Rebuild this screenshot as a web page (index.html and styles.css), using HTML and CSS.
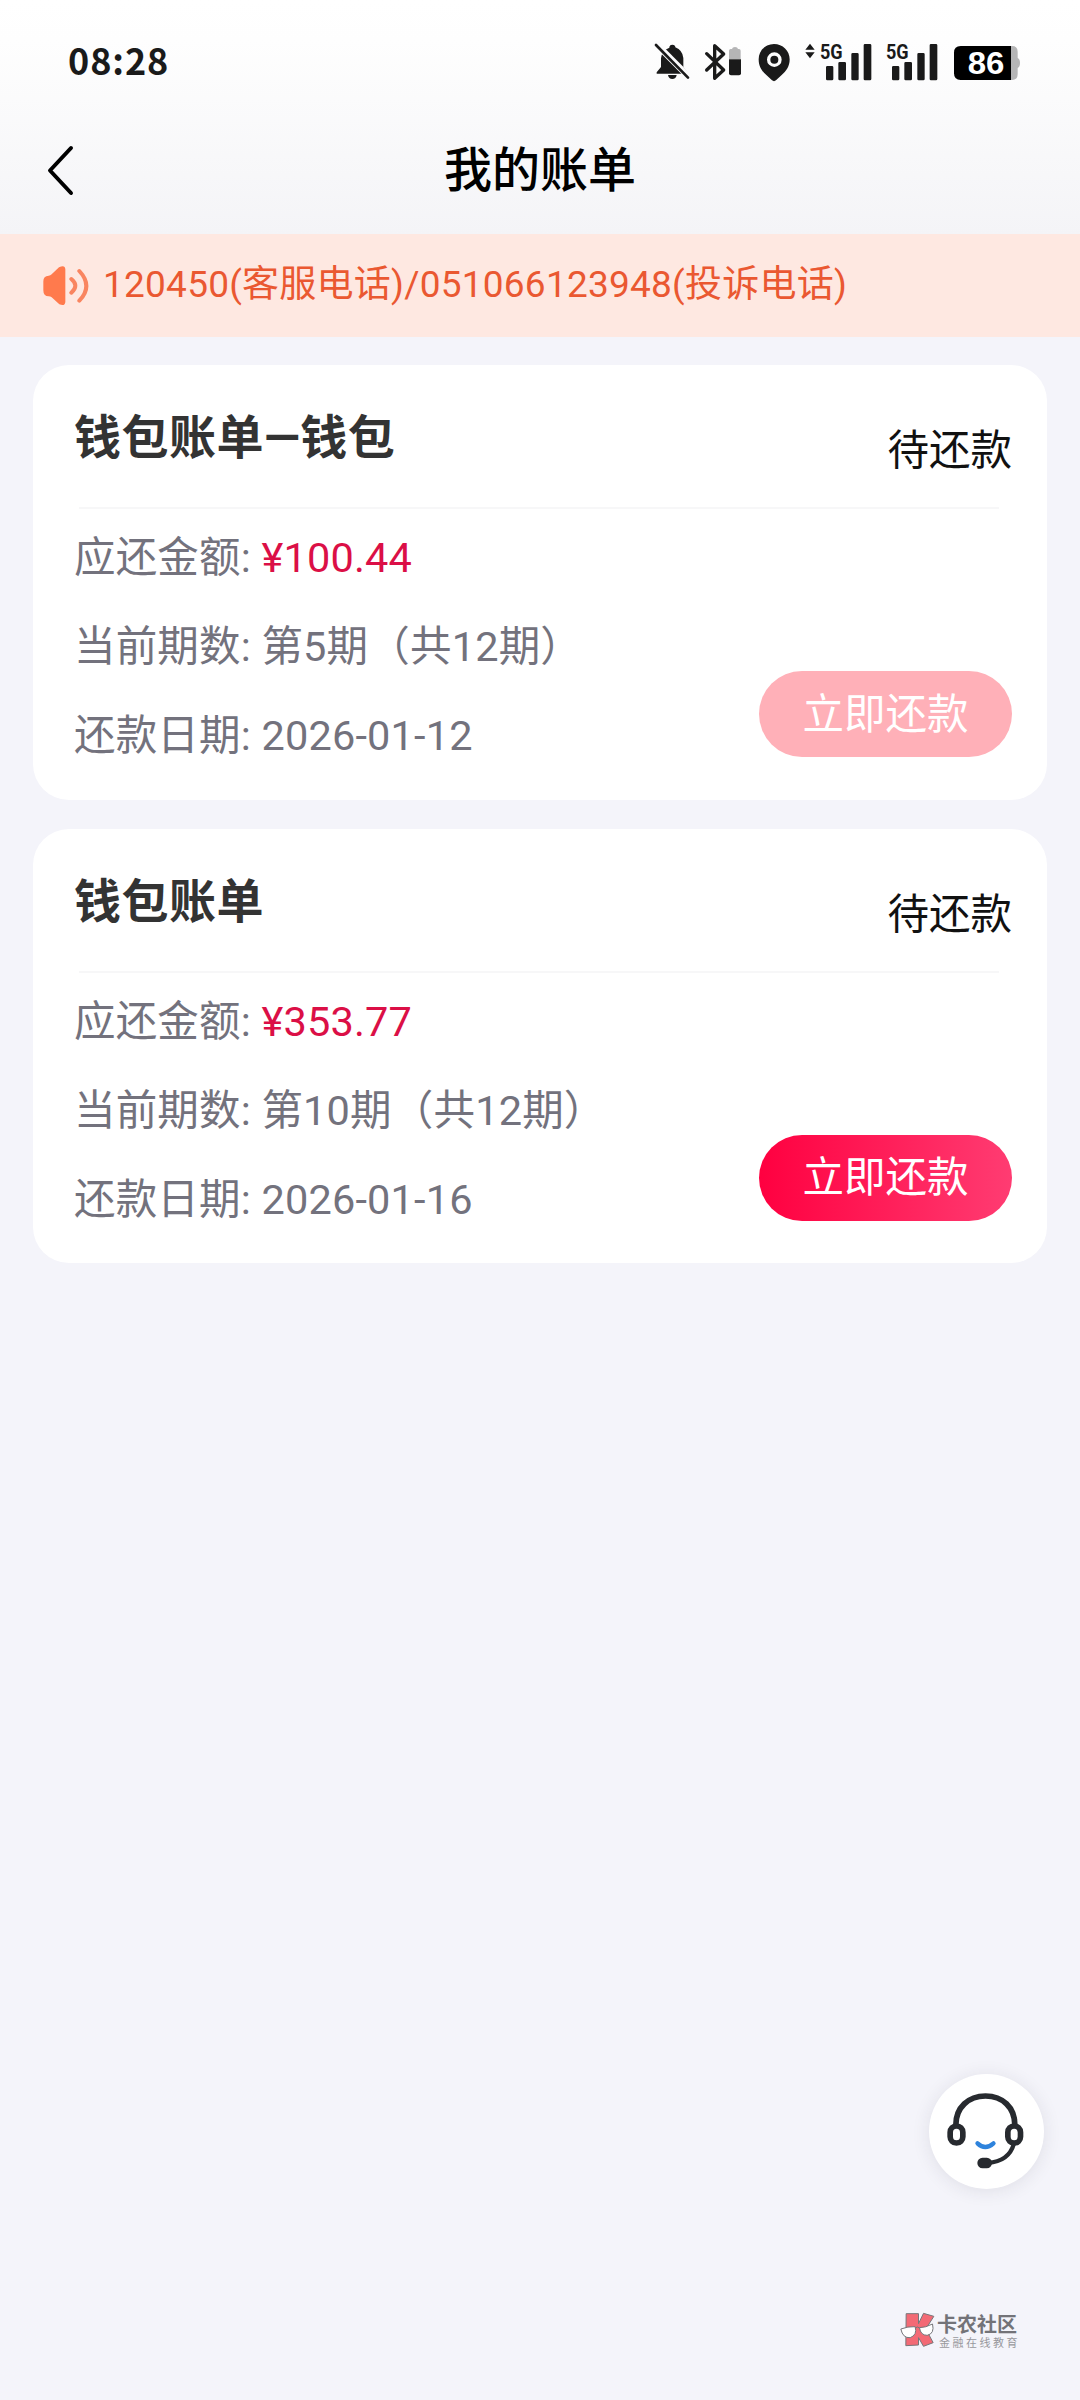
FILE: index.html
```html
<!DOCTYPE html>
<html lang="zh-CN">
<head>
<meta charset="utf-8">
<title>我的账单</title>
<link rel="stylesheet" href="styles.css">
</head>
<body>
<div class="screen">
  <header class="header">
    <div class="status">
      <span class="clock">08:28</span>
      <svg class="status-icons" viewBox="0 0 1200 210" fill="#1a1a1a">
        <path d="M88 53q0-9 9-9t9 8q22 9 24 32v27l15 18v2H50v-4l13-16V85q2-23 25-32z"/>
        <path d="M84 135h26q-2 12-13 12t-13-12z"/>
        <path d="M43 37l110 110" stroke="#fcfcfd" stroke-width="19"/>
        <path d="M48 45l96 98" stroke="#1a1a1a" stroke-width="8" stroke-linecap="round"/>
        <path d="M200 71l51 49-27 25V47l27 25-51 48" fill="none" stroke="#1a1a1a" stroke-width="10" stroke-linecap="round" stroke-linejoin="round"/>
        <path d="M267 87V62q0-5 5-5h4q1-6 9-6t9 6h3q5 0 5 5v25z" fill="#b5b5b6"/>
        <path d="M267 88h36v42q0 6-6 6h-24q-6 0-6-6z"/>
        <path fill-rule="evenodd" d="M402 42c26 0 47 20 47 46 0 22-11 36-24 47l-17 16q-6 5-12 0l-17-16c-13-11-23-25-23-47 0-26 20-46 46-46zm1 25a22 22 0 1 0 0 44 22 22 0 0 0 0-44z"/>
        <circle cx="403" cy="89" r="12"/>
        <path d="M496 59l14-18 14 18zM496 67h28l-14 18z"/>
        <text class="network" x="540" y="86" textLength="68" lengthAdjust="spacingAndGlyphs">5G</text>
        <path d="M562 108h14q4 0 4 4v35q0 4-4 4h-14q-4 0-4-4v-35q0-4 4-4zM599 96h15q4 0 4 4v47q0 4-4 4h-15q-4 0-4-4v-47q0-4 4-4zM638 69h14q4 0 4 4v74q0 4-4 4h-14q-4 0-4-4V73q0-4 4-4zM675 42h15q4 0 4 4v101q0 4-4 4h-15q-4 0-4-4V46q0-4 4-4z"/>
        <text class="network" x="738" y="86" textLength="68" lengthAdjust="spacingAndGlyphs">5G</text>
        <path d="M760 108h14q4 0 4 4v35q0 4-4 4h-14q-4 0-4-4v-35q0-4 4-4zM797 96h15q4 0 4 4v47q0 4-4 4h-15q-4 0-4-4v-47q0-4 4-4zM836 69h14q4 0 4 4v74q0 4-4 4h-14q-4 0-4-4V73q0-4 4-4zM873 42h15q4 0 4 4v101q0 4-4 4h-15q-4 0-4-4V46q0-4 4-4z"/>
        <path d="M1113 48h3q17 0 17 17v19q7 3 7 15t-7 15v19q0 17-17 17h-3z" fill="#b5b5b6"/>
        <path d="M962 48h151v102H962q-20 0-20-20V68q0-20 20-20z" fill="#000"/>
        <text class="battery" x="983" y="133" textLength="110" lengthAdjust="spacingAndGlyphs">86</text>
      </svg>
    </div>
    <div class="navbar">
      <svg class="back" viewBox="0 0 30 54"><path d="M26 4L5 26.500l21 22.500"/></svg>
      <h1 class="page-title">我的账单</h1>
    </div>
  </header>

  <div class="notice">
    <svg class="speaker" viewBox="0 0 138 120">
      <path d="M48 4q18-9 19 6v98q-1 14-18 7L26 94q-4-3-9-3-16 0-16-18V46q0-16 16-17 5 0 9-4z" fill="#ff7a4d"/>
      <path d="M85 39q24 20 0 41M109 15q42 45 0 89" fill="none" stroke="#f98560" stroke-width="12" stroke-linecap="round"/>
    </svg>
    <span class="notice-text">120450(客服电话)/051066123948(投诉电话)</span>
  </div>

  <main class="bills">
    <section class="card">
      <div class="card-head">
        <h2 class="card-title">钱包账单—钱包</h2>
        <span class="state">待还款</span>
      </div>
      <div class="card-body">
        <div class="rows">
          <p class="row">应还金额: <b class="amount">¥100.44</b></p>
          <p class="row">当前期数: 第5期（共12期）</p>
          <p class="row">还款日期: 2026-01-12</p>
        </div>
        <button class="pay pay-disabled">立即还款</button>
      </div>
    </section>
    <section class="card">
      <div class="card-head">
        <h2 class="card-title">钱包账单</h2>
        <span class="state">待还款</span>
      </div>
      <div class="card-body">
        <div class="rows">
          <p class="row">应还金额: <b class="amount">¥353.77</b></p>
          <p class="row">当前期数: 第10期（共12期）</p>
          <p class="row">还款日期: 2026-01-16</p>
        </div>
        <button class="pay">立即还款</button>
      </div>
    </section>
  </main>

  <div class="service">
    <svg class="headset" viewBox="0 0 230 228" fill="none" stroke="#272a2f" stroke-width="17" stroke-linecap="round">
      <path d="M26 96C26 43 64 9 115 9s88 34 88 87"/>
      <rect x="9" y="99" width="38" height="51" rx="19"/>
      <rect x="182" y="99" width="38" height="51" rx="19"/>
      <path d="M200 153q-15 52-78 57" stroke-width="13"/>
      <rect x="99" y="203" width="27" height="14" rx="7" fill="#272a2f"/>
      <path d="M91 151q23 22 48 0" stroke="#2e83dc" stroke-width="13"/>
    </svg>
  </div>

  <div class="brand">
    <svg class="brand-logo" viewBox="0 0 104 108" stroke="#77777b" stroke-width="3">
      <path d="M18 5h37v30L70 4l31 9-24 38 22 41-29 11-15-26v22l-38 2z" fill="#f36a75"/>
      <path d="M2 51q21-8 43-7 7 25-15 33Q8 79 2 51zM58 47q18 0 39-11 7 29-16 34-20 0-23-23z" fill="#fff"/>
      <path d="M45 48q7-6 13 0" fill="none"/>
    </svg>
    <div class="brand-text">
      <span class="brand-name">卡农社区</span>
      <span class="brand-sub">金融在线教育</span>
    </div>
  </div>
</div>
</body>
</html>
```
FILE: styles.css
```css
* { box-sizing: border-box; }

body {
  margin: 0;
  background: #f4f4fa;
  font-family: Roboto, "Noto Sans CJK SC", sans-serif;
}

.screen {
  position: relative;
  width: 1080px;
  height: 2400px;
  overflow: hidden;
}

.header {
  height: 234px;
  background: linear-gradient(#fff 0, #fefefe 40px, #f4f4f7 234px);
}

.status {
  display: flex;
  justify-content: space-between;
  height: 100px;
  padding: 30px 40px 0 68px;
}

.clock {
  font: 700 36px/59px "Noto Sans CJK SC", sans-serif;
  letter-spacing: 0.9px;
  color: #1a1a1a;
}

.status-icons { width: 400px; height: 70px; }
.network { font: 700 58px Roboto, sans-serif; }
.battery { font: 700 92px "Liberation Sans", sans-serif; fill: #fff; }

.navbar {
  display: grid;
  grid-template-columns: 120px 1fr 120px;
  align-items: center;
  height: 141px;
}

.back {
  width: 30px;
  height: 54px;
  margin-left: 45px;
  fill: none;
  stroke: #000;
  stroke-width: 4;
  stroke-linecap: round;
  stroke-linejoin: round;
}

.page-title {
  margin: 0;
  text-align: center;
  font-size: 48px;
  line-height: 70px;
  font-weight: 500;
  color: #000;
}

.notice {
  display: flex;
  align-items: center;
  height: 103px;
  padding-left: 43px;
  background: #fee8e1;
}

.speaker { width: 46px; height: 40px; margin-right: 14px; }
.notice-text {
  padding-bottom: 2px;
  font-size: 37px;
  line-height: 54px;
  letter-spacing: 0.24px;
  color: #ea5831;
  white-space: nowrap;
}

.bills {
  display: flex;
  flex-direction: column;
  gap: 29px;
  padding: 28px 33px;
}

.card {
  height: 434.5px;
  padding: 0 35px 0 41px;
  border-radius: 36px;
  background: #fff;
}

.card-head {
  position: relative;
  display: flex;
  justify-content: space-between;
  height: 144px;
  padding-top: 39px;
}

.card-head::after {
  content: "";
  position: absolute;
  left: 5px;
  right: 13px;
  bottom: 0;
  height: 2px;
  background: #f7f7f8;
}

.card-title {
  margin: 0;
  font-size: 47px;
  line-height: 68px;
  font-weight: 700;
  letter-spacing: 0.5px;
  color: #333;
}

.state { padding-top: 17px; font-size: 41.5px; line-height: 60px; color: #111; }

.card-body { display: flex; justify-content: space-between; }
.rows { padding-top: 4px; }
.row {
  margin: 0;
  font-size: 41.5px;
  line-height: 89px;
  letter-spacing: 0.18px;
  color: #73727d;
  white-space: nowrap;
}
.amount { font-weight: 400; color: #db0f46; }

.pay {
  width: 253px;
  height: 86px;
  margin: 162px 0 0;
  padding: 0 0 7px;
  border: 0;
  border-radius: 43px;
  background: linear-gradient(90deg, #ff0040, #ff3c72);
  font: inherit;
  font-size: 41.5px;
  color: #fff;
}

.pay-disabled { background: #ffb0b8; }

.service {
  position: absolute;
  left: 929px;
  top: 2074px;
  display: flex;
  align-items: center;
  justify-content: center;
  width: 115px;
  height: 115px;
  border-radius: 50%;
  background: #fff;
  box-shadow: 0 2px 18px rgba(40, 40, 60, 0.1);
}

.headset { width: 77px; height: 76px; margin: 0 2px 2px 0; }

.brand {
  position: absolute;
  left: 900px;
  top: 2312px;
  display: flex;
  gap: 2px;
}

.brand-logo { width: 35px; height: 36px; }
.brand-text {
  display: flex;
  flex-direction: column;
  padding-top: 2px;
  font-family: "Liberation Sans", "Noto Sans CJK SC", sans-serif;
}
.brand-name { font-size: 20px; line-height: 23px; font-weight: 700; color: #737378; }
.brand-sub { padding-left: 2px; font-size: 11px; line-height: 13px; letter-spacing: 2.5px; color: #98989d; }
```
